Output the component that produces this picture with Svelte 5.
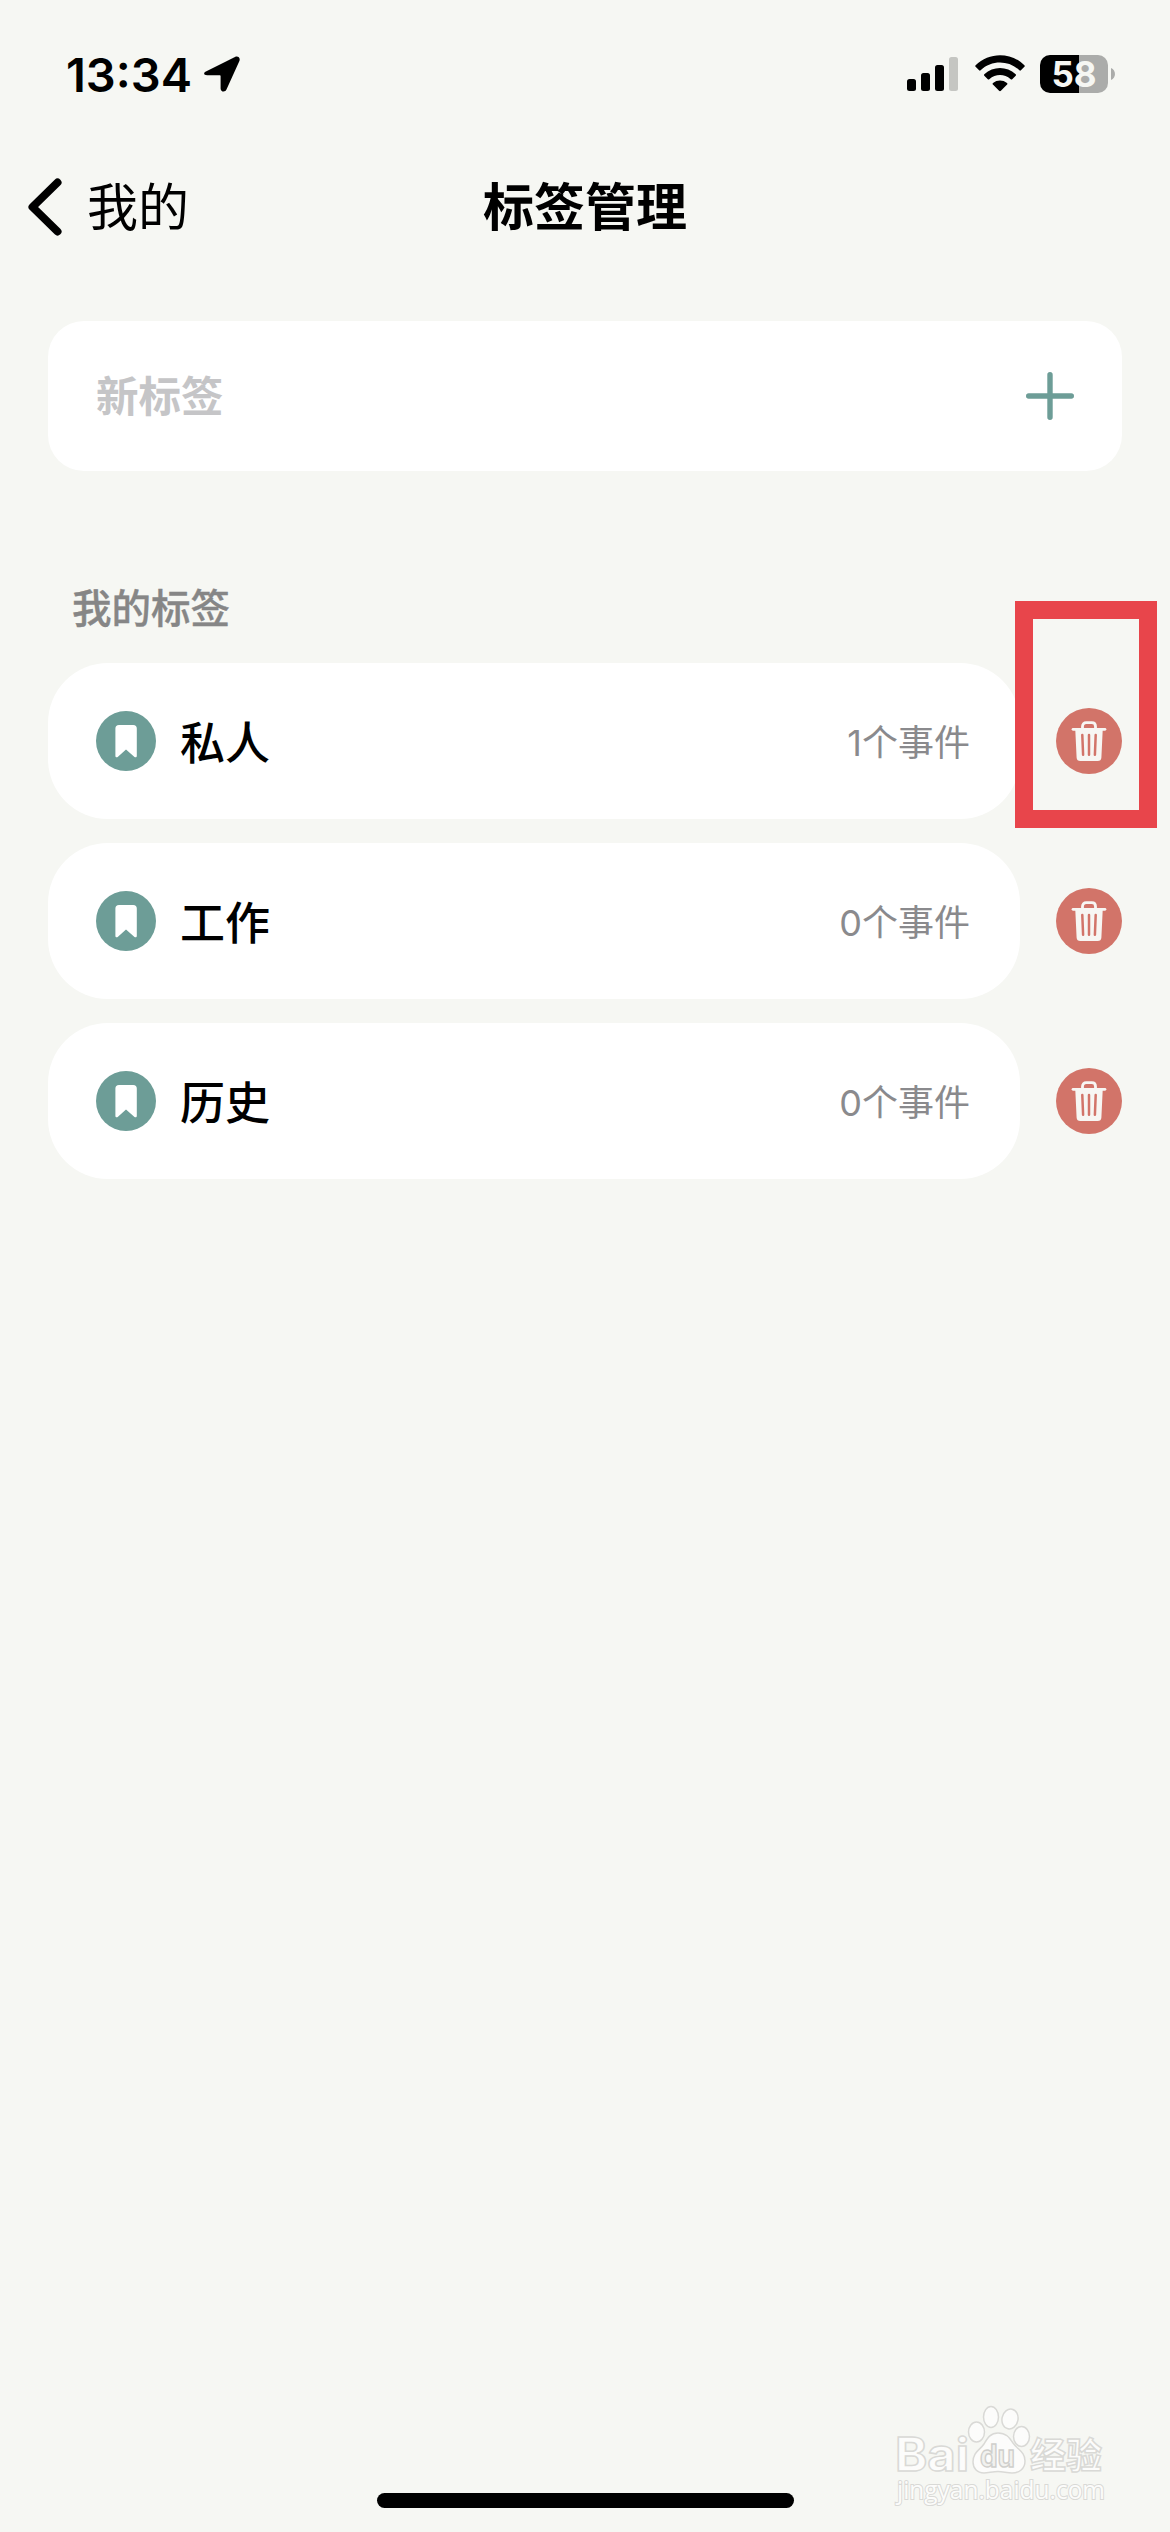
<script lang="ts">
  interface Tag {
    name: string;
    count: number;
    highlighted?: boolean;
  }

  let tags = $state<Tag[]>([
    { name: "私人", count: 1, highlighted: true },
    { name: "工作", count: 0 },
    { name: "历史", count: 0 },
  ]);
  let newTag = $state("");

  function addTag(e: Event) {
    e.preventDefault();
    const name = newTag.trim();
    if (!name) return;
    tags.push({ name, count: 0 });
    newTag = "";
  }

  function removeTag(index: number) {
    tags.splice(index, 1);
  }
</script>

<div class="screen">
  <div class="status-bar">
    <div class="status-left">
      <span class="time">13:34</span>
      <svg class="location" width="36" height="36" viewBox="0 0 36 36">
        <path d="M2.4 15.2 31 .9c3-1.4 5.600 1 4.400 4L22.600 33.300c-1.300 3.400-6 2.800-6-.9V20.200c0-.6-.4-1-1-1H3.200c-3.800 0-4.100-2.700-.8-4Z" />
      </svg>
    </div>
    <div class="status-right">
      <svg class="signal" width="51" height="38" viewBox="0 0 51 38">
        <rect x="0" y="24" width="9" height="12" rx="2.500" />
        <rect x="14" y="18" width="9" height="18" rx="2.500" />
        <rect x="28" y="10" width="9" height="26" rx="2.500" />
        <rect x="42" y="2" width="9" height="34" rx="2.500" fill="#c5c6c2" />
      </svg>
      <svg class="wifi" width="50" height="38" viewBox="0 0 50 38">
        <path d="M.6 10.300C14-3.200 36-3.200 49.400 10.300c.5.500.5 1 0 1.500l-3.500 3.500c-.5.500-1 .5-1.500 0C33.500 5 16.500 5 5.600 15.300c-.5.500-1 .5-1.500 0L.6 11.800c-.5-.5-.5-1 0-1.500Z" />
        <path d="M9.300 19.200c9-8.400 22.400-8.400 31.400 0 .5.500.5 1 0 1.500l-3.500 3.500c-.5.500-1 .5-1.500 0-6.400-5.600-15-5.600-21.400 0-.5.500-1 .5-1.500 0l-3.500-3.500c-.5-.5-.5-1 0-1.500Z" />
        <path d="M18 28c4.200-3.300 9.800-3.300 14 0 .6.500.6 1.100.1 1.600l-6.200 6.200c-.6.600-1.200.6-1.800 0l-6.200-6.200c-.5-.5-.5-1.100.1-1.600Z" />
      </svg>
      <div class="battery">
        <div class="battery-body">58</div>
        <svg width="4" height="12" viewBox="0 0 4 12"><path d="M0 0c5.300 2 5.300 10 0 12Z" fill="#abacaa" /></svg>
      </div>
    </div>
  </div>

  <header class="nav">
    <button type="button" class="back">
      <svg width="34" height="58" viewBox="0 0 34 58">
        <path d="M29.500 4.500 4.500 29l25 24.500" fill="none" stroke="#000" stroke-width="8" stroke-linecap="round" stroke-linejoin="round" />
      </svg>
      <span>我的</span>
    </button>
    <h1>标签管理</h1>
  </header>

  <form class="new-tag" onsubmit={addTag}>
    <input type="text" placeholder="新标签" autocomplete="off" bind:value={newTag} />
    <button type="submit" class="icon-btn" aria-label="添加">
      <svg width="48" height="48" viewBox="0 0 48 48">
        <path d="M24 2.700v42.600M2.700 24h42.600" stroke="#6d9d97" stroke-width="5.400" stroke-linecap="round" />
      </svg>
    </button>
  </form>

  <h2>我的标签</h2>

  <ul class="tags">
    {#each tags as tag, i}
      <li>
        <div class="tag">
          <svg width="60" height="60" viewBox="0 0 60 60">
            <circle cx="30" cy="30" r="30" fill="#6d9d97" />
            <path d="M23 14h14.200a3.600 3.600 0 0 1 3.600 3.600v27.300c0 1.300-1.300 1.900-2.300 1L30 38.400l-8.300 7.500c-1 .9-2.300.3-2.300-1V17.600A3.600 3.600 0 0 1 23 14Z" fill="#fff" />
          </svg>
          <span class="name">{tag.name}</span>
          <span class="count">{tag.count}个事件</span>
        </div>
        <button type="button" class="icon-btn" aria-label="删除" onclick={() => removeTag(i)}>
          <svg width="66" height="66" viewBox="0 0 66 66">
            <circle cx="33" cy="33" r="33" fill="#d27469" />
            <path d="M26.500 21v-2.500c0-2.300 1.400-3.800 3.700-3.800h5.600c2.300 0 3.700 1.500 3.700 3.800V21" fill="none" stroke="#f7f6f3" stroke-width="2.800" />
            <path d="M17 21.300h32" stroke="#f7f6f3" stroke-width="2.700" stroke-linecap="round" />
            <path d="M19.300 22h27.400l-1.300 27.400c-.1 2.300-1.500 3.600-3.700 3.600H24.300c-2.200 0-3.600-1.300-3.700-3.600Z" fill="#f7f6f3" />
            <path d="m26.300 27 .8 19.800M33 27v19.800M39.700 27l-.8 19.800" stroke="#d27469" stroke-width="2.500" stroke-linecap="round" />
          </svg>
        </button>
        {#if tag.highlighted}
          <div class="highlight"></div>
        {/if}
      </li>
    {/each}
  </ul>

  <div class="home-indicator"></div>

  <svg class="watermark" width="230" height="110" viewBox="0 0 230 110">
    <g fill="#fcfcfb" stroke="#d9d9d6" stroke-width="1.500">
      <text class="latin" x="5" y="71" font-size="46" textLength="74" lengthAdjust="spacingAndGlyphs">Bai</text>
      <ellipse cx="86.500" cy="32" rx="8" ry="10" />
      <ellipse cx="101" cy="17" rx="7.500" ry="10.500" />
      <ellipse cx="120" cy="19" rx="8" ry="10" transform="rotate(12 120 19)" />
      <ellipse cx="131.500" cy="36.500" rx="8" ry="10" />
      <path d="M108 33c8 0 11 4 15 10 5 7 12 9 12 18 0 8-6 12-13 12-5 0-9-1.500-14-1.500S98 73 94 73c-7 0-11-5-11-11 0-10 7-12 11-18 4-7 7-11 14-11Z" />
      <text class="latin" x="90" y="67" font-size="31" fill="#f1f1ee" stroke="#cfcfcc" textLength="35" lengthAdjust="spacingAndGlyphs">du</text>
      <text class="cjk" x="140" y="69" font-size="36">经验</text>
      <text class="url" x="7" y="99" font-size="25" stroke-width="2" paint-order="stroke" textLength="208" lengthAdjust="spacingAndGlyphs">jingyan.baidu.com</text>
    </g>
  </svg>
</div>

<style>
  :global(body) {
    margin: 0;
    background: #f6f7f3;
  }

  .screen {
    position: relative;
    display: flex;
    flex-direction: column;
    width: 1170px;
    height: 2532px;
    box-sizing: border-box;
    padding: 0 48px 24px;
    overflow: hidden;
    background: #f6f7f3;
    color: #000;
    font-family: Inter, "Noto Sans CJK SC", sans-serif;
  }

  button {
    font: inherit;
    color: inherit;
    background: none;
    border: none;
    padding: 0;
    cursor: pointer;
  }

  svg {
    display: block;
    flex: none;
  }

  .status-bar {
    display: flex;
    align-items: center;
    justify-content: space-between;
    height: 148px;
    padding: 0 7px 0 18px;
  }
  .status-left,
  .status-right {
    display: flex;
    align-items: center;
  }
  .time {
    width: 138px;
    padding-top: 2px;
    font-size: 47px;
    font-weight: 600;
    line-height: 56px;
  }
  .signal {
    margin-right: 17px;
  }
  .wifi {
    margin-right: 15px;
  }

  .battery {
    display: flex;
    align-items: center;
    gap: 3px;
  }
  .battery-body {
    width: 68px;
    height: 38px;
    border-radius: 10px;
    background: linear-gradient(to right, #000 39px, #abacaa 39px);
    color: #f6f7f3;
    font-size: 35px;
    font-weight: 700;
    line-height: 38px;
    text-align: center;
  }

  .nav {
    display: grid;
    grid-template-columns: 1fr auto 1fr;
    align-items: center;
    height: 118px;
    margin-left: -20px;
    margin-right: -20px;
    font-family: "Noto Sans CJK SC", sans-serif;
  }
  .back {
    display: flex;
    align-items: center;
    gap: 25px;
    font-size: 51px;
    line-height: 74px;
  }
  .back span {
    padding-bottom: 6px;
  }
  h1 {
    margin: 0;
    padding-bottom: 6px;
    font-size: 51px;
    font-weight: 700;
    line-height: 74px;
  }

  .new-tag {
    display: flex;
    align-items: center;
    height: 150px;
    box-sizing: border-box;
    margin-top: 55px;
    padding: 0 48px;
    border-radius: 36px;
    background: #fff;
  }
  .new-tag input {
    flex: 1;
    min-width: 0;
    padding: 0 0 4px;
    border: none;
    outline: none;
    background: transparent;
    font: 700 42.5px/62px "Noto Sans CJK SC", sans-serif;
    color: #000;
  }
  .new-tag input::placeholder {
    color: #c5c5c7;
    opacity: 1;
  }

  h2 {
    margin: 107px 0 29px 24px;
    font: 500 39.5px/56px "Noto Sans CJK SC", sans-serif;
    color: #868686;
    -webkit-text-stroke: 0.4px #868686;
  }

  .tags {
    display: flex;
    flex-direction: column;
    gap: 24px;
    margin: 0;
    padding: 0;
    list-style: none;
  }
  .tags li {
    position: relative;
    display: flex;
    align-items: center;
    gap: 36px;
  }
  .tag {
    display: flex;
    flex: 1;
    align-items: center;
    height: 156px;
    box-sizing: border-box;
    padding: 0 50px 0 48px;
    border-radius: 60px;
    background: #fff;
  }
  .name {
    flex: 1;
    margin-left: 24px;
    padding-top: 5px;
    font-size: 45px;
    font-weight: 500;
    line-height: 66px;
  }
  .count {
    padding-top: 3px;
    font-size: 36px;
    line-height: 54px;
    color: #8a8a8d;
  }

  .highlight {
    position: absolute;
    top: -62px;
    right: -35px;
    width: 142px;
    height: 227px;
    box-sizing: border-box;
    border: 18px solid #e8454b;
    pointer-events: none;
  }

  .home-indicator {
    width: 417px;
    height: 15px;
    margin: auto auto 0;
    border-radius: 8px;
    background: #000;
  }

  .watermark {
    position: absolute;
    right: 50px;
    bottom: 22px;
  }
  .latin {
    font-family: Inter, sans-serif;
    font-weight: 700;
  }
  .cjk {
    font-family: "Noto Sans CJK SC", sans-serif;
    font-weight: 700;
  }
  .url {
    font-family: "Open Sans", sans-serif;
  }
</style>
